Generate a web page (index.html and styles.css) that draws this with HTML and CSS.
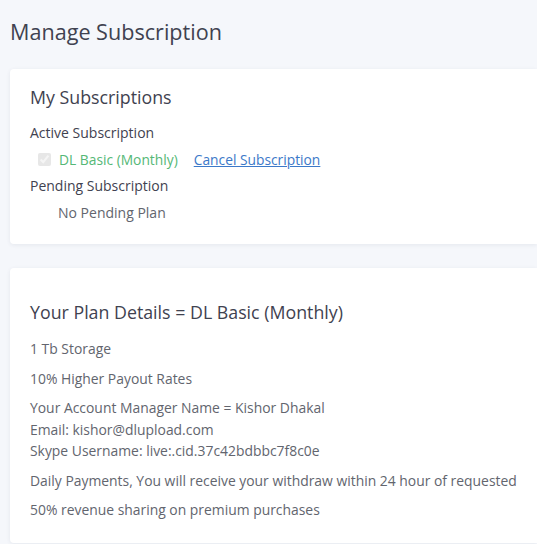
FILE: index.html
```html
<!DOCTYPE html>
<html lang="en">

<head>
    <meta charset="UTF-8">
    <meta name="viewport" content="width=device-width, initial-scale=1.0">
    <title>Manage Subscription</title>

    <link rel="stylesheet" href="styles.css">
</head>

<body>
    <div class="main">
        <h1 class="page-title">Manage Subscription</h1>

        <div class="card">
            <h2 class="card-title">My Subscriptions</h2>
            <div class="label">Active Subscription</div>
            <div class="plan-row">
                <input type="checkbox" class="check" checked disabled>
                <span class="plan-name">DL Basic (Monthly)</span>
                <a href="#" class="cancel">Cancel Subscription</a>
            </div>
            <div class="label">Pending Subscription</div>
            <div class="no-plan">No Pending Plan</div>
        </div>

        <div class="card details">
            <h2 class="card-title">Your Plan Details = DL Basic (Monthly)</h2>
            <p>1 Tb Storage</p>
            <p>10% Higher Payout Rates</p>
            <p>
                Your Account Manager Name = Kishor Dhakal<br>
                Email: kishor@dlupload.com<br>
                Skype Username: live:.cid.37c42bdbbc7f8c0e
            </p>
            <p>Daily Payments, You will receive your withdraw within 24 hour of requested</p>
            <p>50% revenue sharing on premium purchases</p>
        </div>
    </div>
</body>

</html>
```

FILE: styles.css
```css
body {
    margin: 0;
    background-color: #f5f7fb;
    font-family: 'Open Sans', 'Liberation Sans', sans-serif;
    color: #3c3f48;
    overflow: hidden;
}

.main {
    padding: 0 0 0 10px;
}

.page-title {
    margin: 0;
    padding: 19px 0 24px;
    font-size: 21.6px;
    font-weight: 500;
    line-height: 26px;
    color: #3f4250;
}

.card {
    background: white;
    border-radius: 4px 0 0 4px;
    box-shadow: 0 1px 4px rgba(40, 50, 80, 0.08);
    padding: 16px 0 17px 20px;
    margin-bottom: 24px;
}

.card-title {
    margin: 0 0 11px;
    font-size: 17.8px;
    font-weight: 500;
    line-height: 24px;
    color: #3f4250;
}

.label {
    font-size: 14px;
    font-weight: 500;
    line-height: 26px;
    color: #3f4250;
}

.plan-row {
    display: flex;
    align-items: center;
    padding-left: 7px;
    height: 27px;
    font-size: 13.8px;
}

.check {
    width: 13px;
    height: 13px;
    margin: 0 8px 0 1px;
    opacity: 0.5;
}

.plan-name {
    color: #55b876;
}

.cancel {
    margin-left: 16px;
    color: #3c79c9;
}

.no-plan {
    padding-left: 28px;
    font-size: 14px;
    line-height: 28px;
    color: #62656e;
}

.details {
    padding-top: 32px;
    padding-bottom: 14px;
}

.details .card-title {
    margin-bottom: 14px;
}

.details p {
    margin: 0 0 8px;
    font-size: 13.9px;
    line-height: 21.5px;
    color: #62656e;
    white-space: nowrap;
}
```
